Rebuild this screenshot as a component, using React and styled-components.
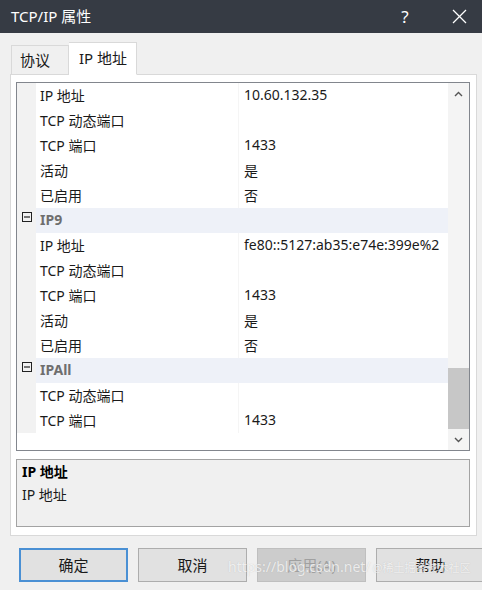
import React from "react";
import styled, { createGlobalStyle } from "styled-components";

const GlobalStyle = createGlobalStyle`
  html, body {
    margin: 0;
    padding: 0;
    background: #f0f0f0;
  }
  body {
    font-family: "Noto Sans", "Noto Sans CJK SC", sans-serif;
    color: #000;
  }
`;

const Window = styled.div`
  width: 482px;
  height: 590px;
  background: #f0f0f0;
  position: relative;
  overflow: hidden;
  display: flex;
  flex-direction: column;
`;

const TitleBar = styled.div`
  height: 33px;
  background: #363b44;
  color: #fff;
  display: flex;
  align-items: center;
  padding-left: 11px;
  font-size: 15px;
  flex-shrink: 0;
`;

const Title = styled.div`
  flex: 1;
  margin-top: -2px;
`;

const TitleBtn = styled.div`
  width: ${p => p.w}px;
  height: 33px;
  display: flex;
  align-items: center;
  justify-content: center;
  font-size: 17px;
  color: #fff;
`;

const Body = styled.div`
  padding: 9px 5px 0 10px;
  display: flex;
  flex-direction: column;
`;

const TabRow = styled.div`
  display: flex;
  align-items: flex-end;
  padding-left: 1px;
  height: 33px;
  position: relative;
  z-index: 1;
  margin-bottom: -1px;
`;

const Tab = styled.div`
  width: ${p => p.w}px;
  height: ${p => (p.active ? 33 : 30)}px;
  box-sizing: border-box;
  padding: 0 0 2px ${p => (p.active ? 10 : 8)}px;
  font-size: 15px;
  display: flex;
  align-items: center;
  background: ${p => (p.active ? "#fff" : "#f0f0f0")};
  border: 1px solid #d9d9d9;
  border-bottom: ${p => (p.active ? "1px solid #fff" : "1px solid #d9d9d9")};
  border-left: ${p => (p.active ? "none" : "1px solid #d9d9d9")};
  color: #1a1a1a;
`;

const Panel = styled.div`
  background: #fff;
  border: 1px solid #d9d9d9;
  height: 462px;
  box-sizing: border-box;
  padding: 7px 6px 0 5px;
  display: flex;
  flex-direction: column;
`;

const Grid = styled.div`
  height: 369px;
  box-sizing: border-box;
  border: 1px solid #82868d;
  display: flex;
  background: #fff;
`;

const GridBody = styled.div`
  flex: 1;
  display: flex;
  flex-direction: column;
`;

const Row = styled.div`
  height: 25px;
  display: flex;
  align-items: center;
  font-size: 14px;
`;

const Gutter = styled.div`
  width: 19px;
  height: 25px;
  background: #f2f2f2;
  flex-shrink: 0;
  display: flex;
  justify-content: center;
  padding-top: 4px;
  box-sizing: border-box;
`;

const Label = styled.div`
  width: 203px;
  height: 25px;
  box-sizing: border-box;
  padding: 0 0 2px 4px;
  display: flex;
  align-items: center;
  border-right: 1px solid #f5f5f5;
  color: #1a1a1a;
`;

const Value = styled.div`
  flex: 1;
  padding: 0 0 2px 5px;
  color: #1a1a1a;
  white-space: nowrap;
`;

const CategoryBand = styled.div`
  flex: 1;
  height: 25px;
  box-sizing: border-box;
  background: #eef1f8;
  display: flex;
  align-items: center;
  padding: 0 0 2px 4px;
  font-weight: 700;
  color: #6e6e6e;
  font-size: 14px;
`;

const Scrollbar = styled.div`
  width: 21px;
  background: #f4f4f4;
  display: flex;
  flex-direction: column;
`;

const Arrow = styled.div`
  height: 22px;
  display: flex;
  align-items: center;
  justify-content: center;
`;

const Track = styled.div`
  flex: 1;
  display: flex;
  flex-direction: column;
  padding-top: ${p => p.offset}px;
`;

const Thumb = styled.div`
  height: 61px;
  background: #c7c7c7;
`;

const Desc = styled.div`
  margin-top: 8px;
  height: 68px;
  box-sizing: border-box;
  border: 1px solid #a3a3a3;
  background: #f0f0f0;
  padding: 0 5px;
  font-size: 14px;
  line-height: 23px;
  color: #1a1a1a;
`;

const DescTitle = styled.div`
  font-weight: 700;
  color: #000;
`;

const Buttons = styled.div`
  display: flex;
  gap: 10px;
  padding: 12px 0 0 19px;
`;

const Button = styled.div`
  width: 109px;
  height: 34px;
  box-sizing: border-box;
  flex-shrink: 0;
  display: flex;
  align-items: center;
  justify-content: center;
  padding-bottom: 1px;
  font-size: 15px;
  background: ${p => (p.disabled ? "#cccccc" : "#e1e1e1")};
  color: ${p => (p.disabled ? "#a0a0a0" : "#1a1a1a")};
  border: ${p =>
    p.primary ? "2px solid #4a90d4" : p.disabled ? "1px solid #bfbfbf" : "1px solid #adadad"};
`;

const Watermark = styled.div`
  position: absolute;
  left: 228px;
  top: 557px;
  display: flex;
  align-items: baseline;
  gap: 2px;
  color: rgba(255, 255, 255, 0.75);
  text-shadow: 0 0 1px rgba(120, 120, 120, 0.35);
  white-space: nowrap;
  pointer-events: none;
`;

const WatermarkPart = styled.span`
  font-size: ${p => p.size}px;
`;

const CollapseIcon = () => (
  <svg width="10" height="10" viewBox="0 0 10 10">
    <rect x="0.5" y="0.5" width="9" height="9" fill="none" stroke="#222" strokeWidth="1" />
    <line x1="2" y1="5" x2="8" y2="5" stroke="#222" strokeWidth="1.2" />
  </svg>
);

const Chevron = ({ up }) => (
  <svg width="9" height="6" viewBox="0 0 9 6">
    <polyline
      points={up ? "1,5 4.5,1.5 8,5" : "1,1 4.5,4.5 8,1"}
      fill="none"
      stroke="#555"
      strokeWidth="1.4"
    />
  </svg>
);

const rows = [
  { label: "IP 地址", value: "10.60.132.35" },
  { label: "TCP 动态端口", value: "" },
  { label: "TCP 端口", value: "1433" },
  { label: "活动", value: "是" },
  { label: "已启用", value: "否" },
  { cat: "IP9" },
  { label: "IP 地址", value: "fe80::5127:ab35:e74e:399e%2" },
  { label: "TCP 动态端口", value: "" },
  { label: "TCP 端口", value: "1433" },
  { label: "活动", value: "是" },
  { label: "已启用", value: "否" },
  { cat: "IPAll" },
  { label: "TCP 动态端口", value: "" },
  { label: "TCP 端口", value: "1433" },
];

export default function App() {
  return (
    <Window>
      <GlobalStyle />
      <TitleBar>
        <Title>TCP/IP 属性</Title>
        <TitleBtn w={22}>?</TitleBtn>
        <TitleBtn w={34} style={{ marginLeft: 26, marginRight: 6 }}>
          <svg width="15" height="15" viewBox="0 0 15 15">
            <line x1="1" y1="1" x2="14" y2="14" stroke="#fff" strokeWidth="1.3" />
            <line x1="14" y1="1" x2="1" y2="14" stroke="#fff" strokeWidth="1.3" />
          </svg>
        </TitleBtn>
      </TitleBar>
      <Body>
        <TabRow>
          <Tab w={58}>协议</Tab>
          <Tab w={68} active>IP 地址</Tab>
        </TabRow>
        <Panel>
          <Grid>
            <GridBody>
              {rows.map((r, i) =>
                r.cat ? (
                  <Row key={i}>
                    <Gutter>
                      <CollapseIcon />
                    </Gutter>
                    <CategoryBand>{r.cat}</CategoryBand>
                  </Row>
                ) : (
                  <Row key={i}>
                    <Gutter />
                    <Label>{r.label}</Label>
                    <Value>{r.value}</Value>
                  </Row>
                )
              )}
            </GridBody>
            <Scrollbar>
              <Arrow>
                <Chevron up />
              </Arrow>
              <Track offset={264}>
                <Thumb />
              </Track>
              <Arrow>
                <Chevron />
              </Arrow>
            </Scrollbar>
          </Grid>
          <Desc>
            <DescTitle>IP 地址</DescTitle>
            <div>IP 地址</div>
          </Desc>
        </Panel>
      </Body>
      <Buttons>
        <Button primary>确定</Button>
        <Button>取消</Button>
        <Button disabled>应用(A)</Button>
        <Button>帮助</Button>
      </Buttons>
      <Watermark>
        <WatermarkPart size={14}>https://blog.csdn.net/</WatermarkPart>
        <WatermarkPart size={11}>@稀土掘金技术社区</WatermarkPart>
      </Watermark>
    </Window>
  );
}
